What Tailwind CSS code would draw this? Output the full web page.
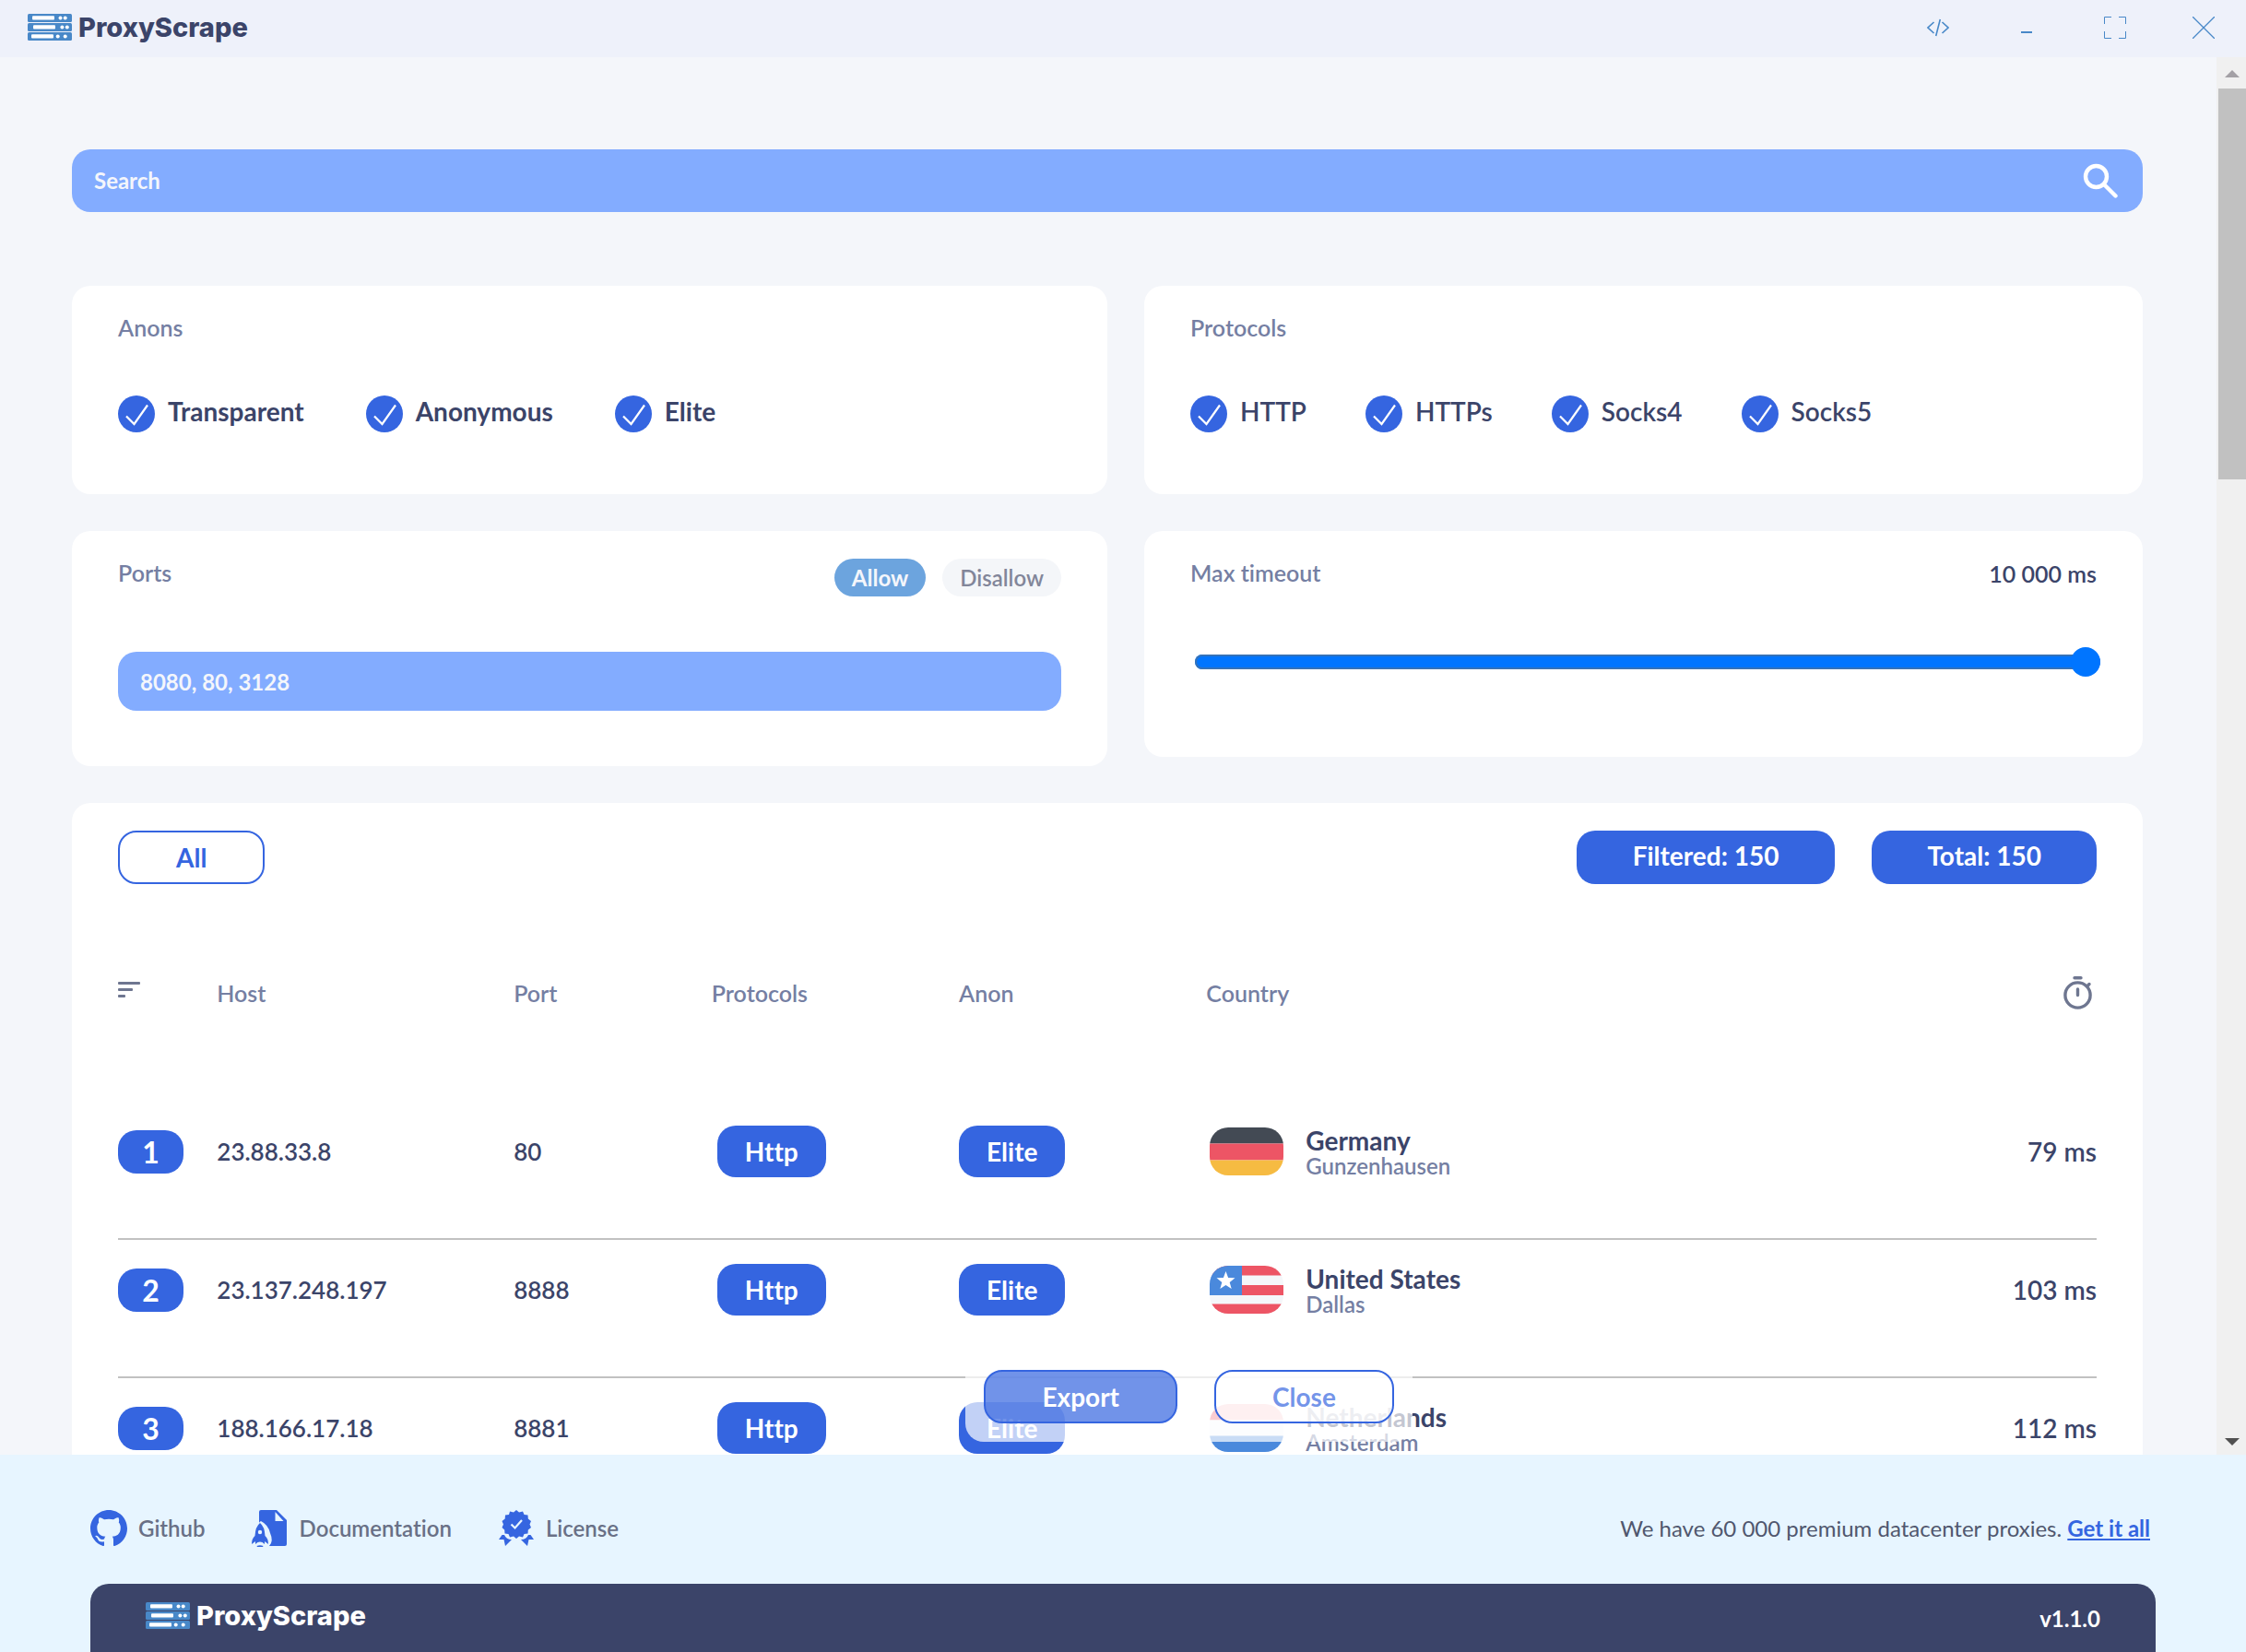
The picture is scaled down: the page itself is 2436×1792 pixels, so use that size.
<!DOCTYPE html>
<html lang="en">
<head>
  <meta charset="UTF-8" />
  <meta name="viewport" content="width=device-width, initial-scale=1.0" />
  <title>ProxyScrape</title>
  <script src="https://cdn.jsdelivr.net/npm/@tailwindcss/browser@4"></script>
</head>
<body class="h-screen flex flex-col overflow-hidden bg-[#f4f6fa] text-[#3b4469] font-['Lato',sans-serif] font-semibold [font-variant-ligatures:none]">

<!-- Shared shapes -->
<svg class="hidden" aria-hidden="true">
  <symbol id="servers" viewBox="0 0 48 30">
    <g fill="#4888c8">
      <rect width="48" height="9" rx="1.5" /><rect y="10" width="48" height="9" rx="1.5" /><rect y="20" width="48" height="9" rx="1.5" />
    </g>
    <g fill="#fff">
      <rect x="5" y="2.3" width="24" height="4.2" rx="1" /><circle cx="35.5" cy="4.4" r="2" /><circle cx="40.7" cy="4.4" r="2" />
      <rect x="6" y="12.3" width="24" height="4.2" rx="1" /><circle cx="37.4" cy="14.4" r="2" /><circle cx="42.8" cy="14.4" r="2" />
      <rect x="4" y="22.3" width="24" height="4.2" rx="1" /><circle cx="32.7" cy="24.4" r="2" /><circle cx="40.7" cy="24.4" r="2" />
    </g>
  </symbol>
  <symbol id="check" viewBox="0 0 40 40">
    <path d="M9 22.5 L17.5 31 L32 10.5" fill="none" stroke="#fff" stroke-width="2.2" />
  </symbol>
</svg>

<header class="flex items-center justify-between bg-[#eef1fa] h-[62px] shrink-0 pl-[30px] pr-[34px] pb-[2px]">
  <div class="flex items-center gap-[7px]">
    <svg class="w-12 h-[30px]"><use href="#servers" /></svg>
    <span class="font-['Inter',sans-serif] font-extrabold text-[29px] leading-[28px]">ProxyScrape</span>
  </div>
  <div class="flex items-center gap-18 text-[#4888c8]">
    <button aria-label="Developer tools" class="size-6">
      <svg viewBox="0 0 24 24" fill="none" stroke="currentColor" stroke-width="1.6"><path d="M7.5 6 L1 12 L7.5 18 M16.5 6 L23 12 L16.5 18 M14.3 3 L9.7 21" /></svg>
    </button>
    <button aria-label="Minimize" class="size-6">
      <svg viewBox="0 0 24 24"><rect x="6" y="16" width="12" height="2" fill="currentColor" /></svg>
    </button>
    <button aria-label="Maximize" class="size-6">
      <svg viewBox="0 0 24 24" fill="none" stroke="currentColor"><path d="M.5 8 V.5 H8 M16 .5 H23.5 V8 M23.5 16 V23.5 H16 M8 23.5 H.5 V16" /></svg>
    </button>
    <button aria-label="Close" class="size-6">
      <svg viewBox="0 0 24 24" fill="none" stroke="currentColor" stroke-width="1.3"><path d="M0 0 L24 24 M24 0 L0 24" /></svg>
    </button>
  </div>
</header>

<div class="relative flex flex-1 min-h-0">
  <main class="flex-1 min-w-0 overflow-hidden pl-[78px] pr-20 pt-[100px]">

    <!-- Search -->
    <label class="flex items-center h-[68px] rounded-[20px] bg-[#83acff] pl-6 pr-[26px]">
      <input type="search" placeholder="Search" aria-label="Search" class="flex-1 outline-none font-bold text-2xl text-white placeholder:text-[#f4f6fb]" />
      <svg class="size-10 text-white" viewBox="0 0 40 40" fill="none" stroke="currentColor" stroke-width="4.4" stroke-linecap="round"><circle cx="15.5" cy="15.5" r="11.5" /><path d="M25 25 L36.5 36.5" /></svg>
    </label>

    <!-- Filters -->
    <div class="flex gap-10 mt-20">
      <section class="w-1/2 h-[226px] rounded-[20px] bg-white px-[50px] pt-7">
        <h2 class="text-[25px] leading-[34px] text-[#757fa3]">Anons</h2>
        <div class="flex gap-[67px] mt-[57px]">
          <label class="flex items-start gap-[14px] text-[28px] leading-[34px] font-bold">
            <span class="grid"><input type="checkbox" checked class="col-start-1 row-start-1 appearance-none size-10 rounded-full bg-[#3565e0]" /><svg class="col-start-1 row-start-1 size-10"><use href="#check" /></svg></span>
            Transparent
          </label>
          <label class="flex items-start gap-[14px] text-[28px] leading-[34px] font-bold">
            <span class="grid"><input type="checkbox" checked class="col-start-1 row-start-1 appearance-none size-10 rounded-full bg-[#3565e0]" /><svg class="col-start-1 row-start-1 size-10"><use href="#check" /></svg></span>
            Anonymous
          </label>
          <label class="flex items-start gap-[14px] text-[28px] leading-[34px] font-bold">
            <span class="grid"><input type="checkbox" checked class="col-start-1 row-start-1 appearance-none size-10 rounded-full bg-[#3565e0]" /><svg class="col-start-1 row-start-1 size-10"><use href="#check" /></svg></span>
            Elite
          </label>
        </div>
      </section>
      <section class="flex-1 h-[226px] rounded-[20px] bg-white px-[50px] pt-7">
        <h2 class="text-[25px] leading-[34px] text-[#757fa3]">Protocols</h2>
        <div class="flex gap-16 mt-[57px]">
          <label class="flex items-start gap-[14px] text-[28px] leading-[34px] font-semibold">
            <span class="grid"><input type="checkbox" checked class="col-start-1 row-start-1 appearance-none size-10 rounded-full bg-[#3565e0]" /><svg class="col-start-1 row-start-1 size-10"><use href="#check" /></svg></span>
            HTTP
          </label>
          <label class="flex items-start gap-[14px] text-[28px] leading-[34px] font-semibold">
            <span class="grid"><input type="checkbox" checked class="col-start-1 row-start-1 appearance-none size-10 rounded-full bg-[#3565e0]" /><svg class="col-start-1 row-start-1 size-10"><use href="#check" /></svg></span>
            HTTPs
          </label>
          <label class="flex items-start gap-[14px] text-[28px] leading-[34px] font-semibold">
            <span class="grid"><input type="checkbox" checked class="col-start-1 row-start-1 appearance-none size-10 rounded-full bg-[#3565e0]" /><svg class="col-start-1 row-start-1 size-10"><use href="#check" /></svg></span>
            Socks4
          </label>
          <label class="flex items-start gap-[14px] text-[28px] leading-[34px] font-semibold">
            <span class="grid"><input type="checkbox" checked class="col-start-1 row-start-1 appearance-none size-10 rounded-full bg-[#3565e0]" /><svg class="col-start-1 row-start-1 size-10"><use href="#check" /></svg></span>
            Socks5
          </label>
        </div>
      </section>
    </div>

    <div class="flex items-start gap-10 mt-10">
      <section class="w-1/2 rounded-[20px] bg-white px-[50px] pt-[30px] pb-[60px]">
        <div class="flex items-start justify-between">
          <label for="ports" class="text-[25px] leading-[30px] text-[#757fa3]">Ports</label>
          <div class="flex gap-[18px] text-2xl">
            <button class="h-[41px] rounded-full bg-[#6ca4de] px-[19px] font-bold text-[#f4f6fb]">Allow</button>
            <button class="h-[41px] rounded-full bg-[#f4f6f9] px-[19px] text-[#82869a]">Disallow</button>
          </div>
        </div>
        <input id="ports" type="text" placeholder="8080, 80, 3128" class="block w-full h-16 mt-[60px] rounded-[20px] bg-[#83acff] px-6 outline-none font-bold text-2xl text-white placeholder:text-[#f4f6fb]" />
      </section>
      <section class="flex-1 rounded-[20px] bg-white px-[50px] pt-[30px] h-[245px]">
        <div class="flex justify-between">
          <label for="timeout" class="text-[25px] leading-[30px] text-[#757fa3]">Max timeout</label>
          <output for="timeout" class="text-[25px] leading-8">10 000 ms</output>
        </div>
        <div class="pl-[5px] -mr-1 pt-[72px] flex">
          <input id="timeout" type="range" min="0" max="10000" value="10000" class="w-full h-4 appearance-none rounded-full bg-[#0075ff] inset-ring-2 inset-ring-[#3572b8] [&::-webkit-slider-thumb]:appearance-none [&::-webkit-slider-thumb]:size-8 [&::-webkit-slider-thumb]:rounded-full [&::-webkit-slider-thumb]:bg-[#0075ff]" />
        </div>
      </section>
    </div>

    <!-- Proxies -->
    <section class="mt-10 rounded-[20px] bg-white px-[50px] pt-[30px]">
      <div class="flex justify-between text-[28px]">
        <button class="h-[58px] rounded-[20px] border-2 border-[#3565e0] px-[61px] font-bold text-[#3565e0]">All</button>
        <div class="flex gap-10 font-bold text-white">
          <span class="h-[58px] leading-[54px] rounded-[20px] bg-[#3565e0] px-[61px]">Filtered: 150</span>
          <span class="h-[58px] leading-[54px] rounded-[20px] bg-[#3565e0] px-[60px]">Total: 150</span>
        </div>
      </div>

      <table class="w-full table-fixed border-separate border-spacing-0 mt-[100px] text-left">
        <thead class="text-[25px] text-[#757fa3]">
          <tr class="h-[136px] align-top">
            <th class="w-[5%] pt-[6px]" aria-label="Sort">
              <svg class="w-6 h-[18px]" viewBox="0 0 24 18" fill="#6e7690"><rect width="24" height="3" rx="1" /><rect y="7" width="16" height="3" rx="1" /><rect y="14" width="8" height="3" rx="1" /></svg>
            </th>
            <th class="w-[15%] font-semibold leading-9">Host</th>
            <th class="w-[10%] font-semibold leading-9">Port</th>
            <th class="w-[12.5%] font-semibold leading-9">Protocols</th>
            <th class="w-[12.5%] font-semibold leading-9">Anon</th>
            <th class="font-semibold leading-9">Country</th>
            <th class="w-[15%]" aria-label="Latency">
              <svg class="ml-auto mr-1 w-8 h-9" viewBox="0 0 32 36" fill="none" stroke="#6e7690" stroke-width="3.4" stroke-linecap="round"><circle cx="15.5" cy="20.5" r="13.6" /><path d="M12 1.7 H19 M15.5 14 V20.5 M26 10.5 L28 8.5" /></svg>
            </th>
          </tr>
        </thead>
        <tbody class="align-top text-[26px] leading-[56px] [&_td]:border-b-2 [&_td]:border-[#c1c1c1] [&_td]:pt-[26px]">
          <tr class="h-[150px]">
            <td class="leading-[50px]"><span class="inline-block align-middle w-[71px] rounded-[20px] bg-[#3565e0] text-center text-[32px] leading-[47px] font-bold text-white">1</span></td>
            <td>23.88.33.8</td>
            <td>80</td>
            <td class="pl-[6px]"><span class="inline-block rounded-[20px] bg-[#3565e0] px-[30px] text-[28px] font-bold text-white">Http</span></td>
            <td><span class="inline-block rounded-[20px] bg-[#3565e0] px-[30px] text-[28px] font-bold text-white">Elite</span></td>
            <td class="pl-1">
              <div class="flex items-center gap-6 h-[56px]">
                <svg class="w-20 h-[52px] rounded-[20px] shrink-0" viewBox="0 0 80 52"><path fill="#434a54" d="M0 0h80v17.5H0z" /><path fill="#ed5565" d="M0 17.5h80v18H0z" /><path fill="#f6bb42" d="M0 35.5h80V52H0z" /></svg>
                <div class="pt-1"><p class="text-[28px] leading-7 font-bold">Germany</p><p class="text-2xl leading-7 text-[#757fa3]">Gunzenhausen</p></div>
              </div>
            </td>
            <td class="text-right text-[28px]">79 ms</td>
          </tr>
          <tr class="h-[150px]">
            <td class="leading-[50px]"><span class="inline-block align-middle w-[71px] rounded-[20px] bg-[#3565e0] text-center text-[32px] leading-[47px] font-bold text-white">2</span></td>
            <td>23.137.248.197</td>
            <td>8888</td>
            <td class="pl-[6px]"><span class="inline-block rounded-[20px] bg-[#3565e0] px-[30px] text-[28px] font-bold text-white">Http</span></td>
            <td><span class="inline-block rounded-[20px] bg-[#3565e0] px-[30px] text-[28px] font-bold text-white">Elite</span></td>
            <td class="pl-1">
              <div class="flex items-center gap-6 h-[56px]">
                <svg class="w-20 h-[52px] rounded-[20px] shrink-0" viewBox="0 0 80 52"><path fill="#f5f7fa" d="M0 0h80v52H0z" /><path fill="#ed5565" d="M0 0h80v10.5H0zM0 21h80v11H0zM0 41.5h80V52H0z" /><path fill="#4a89dc" d="M0 0h35v32H0z" /><path fill="#fff" d="M17.5 6l2.6 7 7.4.3-5.8 4.6 2 7.2-6.2-4.1-6.2 4.1 2-7.2-5.8-4.6 7.4-.3z" /></svg>
                <div class="pt-1"><p class="text-[28px] leading-7 font-bold">United States</p><p class="text-2xl leading-7 text-[#757fa3]">Dallas</p></div>
              </div>
            </td>
            <td class="text-right text-[28px]">103 ms</td>
          </tr>
          <tr class="h-[150px]">
            <td class="leading-[50px]"><span class="inline-block align-middle w-[71px] rounded-[20px] bg-[#3565e0] text-center text-[32px] leading-[47px] font-bold text-white">3</span></td>
            <td>188.166.17.18</td>
            <td>8881</td>
            <td class="pl-[6px]"><span class="inline-block rounded-[20px] bg-[#3565e0] px-[30px] text-[28px] font-bold text-white">Http</span></td>
            <td><span class="inline-block rounded-[20px] bg-[#3565e0] px-[30px] text-[28px] font-bold text-white">Elite</span></td>
            <td class="pl-1">
              <div class="flex items-center gap-6 h-[56px]">
                <svg class="w-20 h-[52px] rounded-[20px] shrink-0" viewBox="0 0 80 52"><path fill="#ed5565" d="M0 0h80v17.5H0z" /><path fill="#f5f7fa" d="M0 17.5h80v17H0z" /><path fill="#4a89dc" d="M0 34.5h80V52H0z" /></svg>
                <div class="pt-1"><p class="text-[28px] leading-7 font-bold">Netherlands</p><p class="text-2xl leading-7 text-[#757fa3]">Amsterdam</p></div>
              </div>
            </td>
            <td class="text-right text-[28px]">112 ms</td>
          </tr>
        </tbody>
      </table>
    </section>
  </main>

  <!-- Scrollbar -->
  <div class="flex flex-col justify-between w-8 bg-[#f0f0f0]" aria-hidden="true">
    <div>
      <svg class="w-8 h-[34px]" viewBox="0 0 32 34"><path fill="#a3a0a5" d="M9 22 L17 14 L25 22z" /></svg>
      <div class="ml-[2px] h-[424px] bg-[#c1c1c1]"></div>
    </div>
    <svg class="w-8 h-[34px]" viewBox="0 0 32 34"><path fill="#505050" d="M9 16 L17 24 L25 16z" /></svg>
  </div>

  <!-- Floating actions -->
  <div class="absolute left-[43%] bottom-[14px] flex gap-10 rounded-[20px] bg-white/70 p-5 text-[28px] font-bold">
    <button class="h-[58px] rounded-[20px] border-2 border-[#3565e0] bg-[#3565e0]/70 px-[61px] text-white">Export</button>
    <button class="h-[58px] rounded-[20px] border-2 border-[#3565e0] bg-white/70 px-[61px] text-[#3565e0]/70">Close</button>
  </div>
</div>

<footer class="shrink-0 bg-[#e7f5ff] px-[98px] pt-[60px]">
  <div class="flex items-center justify-between text-2xl leading-10">
    <nav class="flex gap-[50px] text-[#697086]">
      <a href="#" class="flex items-center gap-3">
        <svg class="size-10" viewBox="0 0 16 16" fill="#3565e0"><path d="M8 0C3.58 0 0 3.58 0 8c0 3.54 2.29 6.53 5.47 7.59.4.07.55-.17.55-.38 0-.19-.01-.82-.01-1.49-2.01.37-2.53-.49-2.69-.94-.09-.23-.48-.94-.82-1.13-.28-.15-.68-.52-.01-.53.63-.01 1.08.58 1.23.82.72 1.21 1.87.87 2.33.66.07-.52.28-.87.51-1.07-1.78-.2-3.64-.89-3.64-3.95 0-.87.31-1.59.82-2.15-.08-.2-.36-1.02.08-2.12 0 0 .67-.21 2.2.82.64-.18 1.32-.27 2-.27s1.36.09 2 .27c1.53-1.04 2.2-.82 2.2-.82.44 1.1.16 1.92.08 2.12.51.56.82 1.27.82 2.15 0 3.07-1.87 3.75-3.65 3.95.29.25.54.73.54 1.48 0 1.07-.01 1.93-.01 2.2 0 .21.15.46.55.38A8.01 8.01 0 0 0 16 8c0-4.42-3.58-8-8-8z" /></svg>
        Github
      </a>
      <a href="#" class="flex items-center gap-[14px]">
        <svg class="w-[38px] h-10" viewBox="0 0 38 40"><path fill="#3565e0" d="M10 0 H25 V12 H38 V37 Q38 39 36 39 H19 Q24 34 20 25 Q18 16 10 12 Q8 13 8 14 V2 Q8 0 10 0z" /><path fill="#3565e0" d="M25 0 H27 L38 11 V13 H25z" /><path fill="#e7f5ff" d="M25.5 2 V12 H34.5z" /><path fill="#3565e0" d="M9 14 Q14 18 14.5 28 Q18 31 18 37 L14 34 V37 L11.5 35 Q9 34 6.5 35 L4 37 V34 L0 37 Q0 31 3.5 28 Q4 18 9 14z M5.5 39 Q9 37.5 12.5 39 L12 40 H6z" /><circle cx="9" cy="24" r="2.2" fill="#e7f5ff" /></svg>
        Documentation
      </a>
      <a href="#" class="flex items-center gap-3">
        <svg class="size-10" viewBox="0 0 40 40" fill="#3565e0"><path d="M20 0l3 2.5 4-1 1.5 3.5 4 .5.3 4 3.2 2.5-1.5 3.500 1.5 3.5-3.2 2.5-.3 4-4 .5-1.5 3.5-4-1-3 2.5-3-2.5-4 1-1.5-3.5-4-.5-.3-4L4.500 19 6 15.500 4.500 12l3.200-2.500.3-4 4-.5L13 1.500l4 1z" /><path d="M4.500 27 L1 32 H6.500 L8 39 L15 32 Q9 32 7 27z M35.500 27 L39 32 H33.500 L32 39 L25 32 Q31 32 33 27z" /><path d="M14.500 15.500 L18.500 19.500 L26 11" fill="none" stroke="#e7f5ff" stroke-width="2.2" /></svg>
        License
      </a>
    </nav>
    <p class="mr-[6px] font-normal text-[#50576e]">We have 60 000 premium datacenter proxies. <a href="#" class="font-bold text-[#3565e0] underline">Get it all</a></p>
  </div>
  <div class="flex items-start justify-between h-[74px] mt-10 rounded-t-[20px] bg-[#3b4469] px-15 pt-5 text-white">
    <div class="flex items-center gap-[7px]">
      <svg class="w-12 h-[30px]"><use href="#servers" /></svg>
      <span class="font-['Inter',sans-serif] font-extrabold text-[29px] leading-[28px]">ProxyScrape</span>
    </div>
    <span class="text-2xl leading-9 font-bold">v1.1.0</span>
  </div>
</footer>

</body>
</html>
